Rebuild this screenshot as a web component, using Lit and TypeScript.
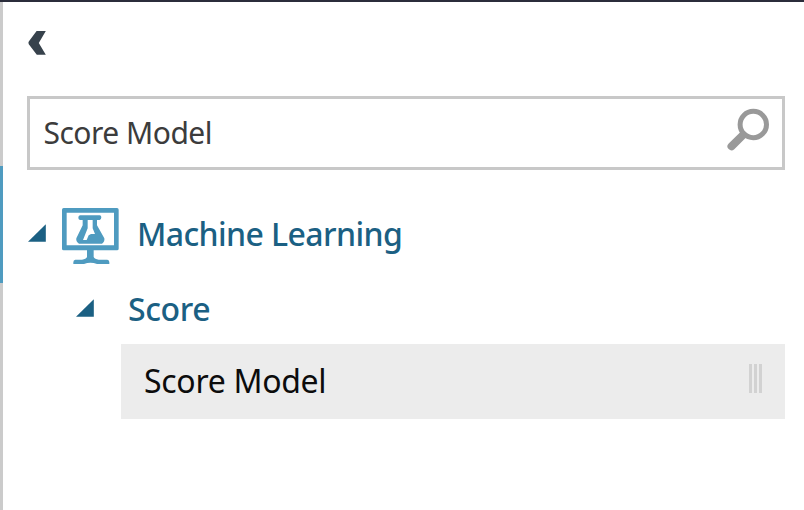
import { LitElement, html, css } from "lit";
import { customElement, property } from "lit/decorators.js";

@customElement("tree-arrow")
class TreeArrow extends LitElement {
  static styles = css`
    :host { display: block; width: 18px; height: 18px; flex: none; }
    svg { display: block; }
  `;
  render() {
    return html`<svg width="18" height="18" viewBox="0 0 18 18"><path d="M0 17.7L17.8 0.2V17.7Z" fill="#1b6083" /></svg>`;
  }
}

@customElement("module-item")
class ModuleItem extends LitElement {
  static styles = css`
    :host {
      display: flex; align-items: center; justify-content: space-between;
      box-sizing: border-box; height: 74.6px; padding: 0 22.5px 0 23.5px;
      background: #ececec; color: #0c0c0c; font-size: 32px;
    }
    .label { line-height: 44px; letter-spacing: -0.3px; white-space: nowrap; }
    .grip { display: flex; gap: 2px; margin-top: -5px; }
    .bar { width: 3px; height: 29px; background: #d2d2d2; }
  `;
  @property() label = "";
  render() {
    return html`<span class="label">${this.label}</span>
      <span class="grip"><i class="bar"></i><i class="bar"></i><i class="bar"></i></span>`;
  }
}

@customElement("app-root")
class AppRoot extends LitElement {
  static styles = css`
    :host {
      display: flex; flex-direction: column; width: 804px; height: 510px; overflow: hidden;
      box-sizing: border-box; border-top: 2px solid #2b2d3b; background: #fff;
      font-family: "Noto Sans", "Open Sans", sans-serif;
    }
    svg { display: block; flex: none; }
    .body { display: flex; flex: 1; }
    .rail { width: 3px; background: #cbcbcb; padding-top: 164px; box-sizing: border-box; }
    .active { height: 117px; background: #4f9bc0; }
    .panel { flex: 1; display: flex; flex-direction: column; padding: 28px 19.5px 0 24px; }
    .back { margin-left: 1px; }
    .search {
      display: flex; align-items: center; justify-content: space-between; box-sizing: border-box;
      height: 74px; margin-top: 40px; padding: 0 11px 0 13.5px; border: 3px solid #c8c8c8;
    }
    .lens { margin-bottom: 6px; }
    .query { font-size: 30px; line-height: 40px; letter-spacing: -0.5px; color: #3c3c3c; white-space: nowrap; }
    .group { display: flex; align-items: center; color: #1b6083; font-size: 32px; font-weight: 500; white-space: nowrap; }
    .category { height: 60px; margin-top: 36px; padding-left: 1px; }
    .category tree-arrow { margin-bottom: 6px; }
    .monitor { margin-left: 16px; }
    .name { line-height: 44px; }
    .category .name { margin-left: 18px; padding-bottom: 4px; letter-spacing: -0.6px; }
    .sub { height: 44px; margin: 21px 0 13px; padding-left: 48.5px; }
    .sub tree-arrow { margin-bottom: 2px; }
    .sub .name { margin-left: 34.5px; letter-spacing: -0.35px; }
    .item { margin-left: 93.5px; }
  `;
  render() {
    return html`
      <div class="body">
        <div class="rail"><div class="active"></div></div>
        <div class="panel">
          <svg class="back" width="20" height="26" viewBox="0 0 20 26">
            <path d="M8.6 1H17.8L10.8 12.9L17.8 24.8H8.8L0.8 14.2Q0 12.9 0.8 11.6Z" fill="#37424c" />
          </svg>
          <div class="search">
            <span class="query">Score Model</span>
            <svg class="lens" width="44" height="44" viewBox="0 0 44 44">
              <circle cx="26.3" cy="16.5" r="13.2" fill="none" stroke="#999" stroke-width="5" />
              <path d="M16 27L4.5 38.3" stroke="#999" stroke-width="8" stroke-linecap="round" />
            </svg>
          </div>
          <div class="group category">
            <tree-arrow></tree-arrow>
            <svg class="monitor" width="57" height="57" viewBox="0 0 171 171">
              <g fill="#4f9bc0">
                <path fill-rule="evenodd" d="M5 0H165Q170 0 170 5V122Q170 127 165 127H5Q0 127 0 122V5Q0 0 5 0ZM14 14V112H156V14Z" />
                <path d="M75 126H95V147Q98 154 110 155H136Q142 156 142 163V168H105Q85 161 66 168H34V163Q34 156 40 155H60Q72 154 75 147Z" />
                <path fill-rule="evenodd" d="M54 22H113Q118 22 118 28T113 36H105V52L127 91Q129 101 120 107H51Q41 101 43 91L62 52V36H54Q49 35 49 29T54 22ZM77 36V61L63 96H74L80 82L87 78H99L92 61V36Z" />
              </g>
            </svg>
            <span class="name">Machine Learning</span>
          </div>
          <div class="group sub">
            <tree-arrow></tree-arrow>
            <span class="name">Score</span>
          </div>
          <module-item class="item" label="Score Model"></module-item>
        </div>
      </div>
    `;
  }
}
